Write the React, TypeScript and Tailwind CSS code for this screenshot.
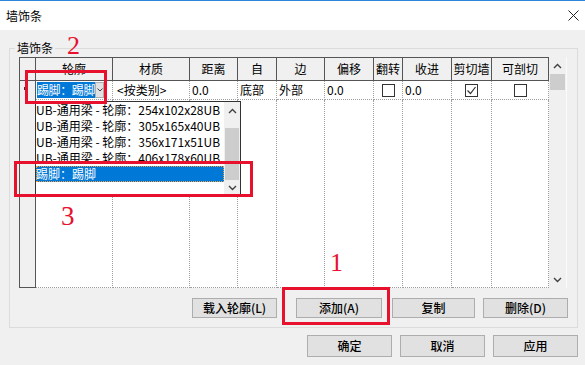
import React from 'react';

const COLS = [
  { w: 'w-[77px]', t: '轮廓' },
  { w: 'w-[77px]', t: '材质' },
  { w: 'w-[48px]', t: '距离' },
  { w: 'w-[39px]', t: '自' },
  { w: 'w-[48px]', t: '边' },
  { w: 'w-[49px]', t: '偏移' },
  { w: 'w-[29px]', t: '翻转' },
  { w: 'w-[49px]', t: '收进' },
  { w: 'w-[40px]', t: '剪切墙' },
  { w: 'w-[57px]', t: '可剖切' },
];

const PROFILES = [
  'UB-通用梁 - 轮廓：254x102x28UB',
  'UB-通用梁 - 轮廓：305x165x40UB',
  'UB-通用梁 - 轮廓：356x171x51UB',
  'UB-通用梁 - 轮廓：406x178x60UB',
];

const Chevron = ({ up }: { up?: boolean }) => (
  <svg width="9" height="6" viewBox="0 0 9 6">
    <polyline
      points={up ? '1,5 4.5,1.5 8,5' : '1,1 4.5,4.5 8,1'}
      fill="none"
      stroke="#404040"
      strokeWidth="1.4"
    />
  </svg>
);

const CheckBox = ({ checked }: { checked?: boolean }) => (
  <div className="w-[13px] h-[13px] border border-[#333] bg-white flex items-center justify-center">
    {checked && (
      <svg width="11" height="11" viewBox="0 0 11 11">
        <polyline points="1.5,5.5 4.5,8.5 9.5,2" fill="none" stroke="#333" strokeWidth="1.2" />
      </svg>
    )}
  </div>
);

const Btn = ({ label, cls }: { label: string; cls: string }) => (
  <button className={`bg-[#e1e1e1] border border-[#adadad] text-[12px] font-medium text-black flex items-center justify-center ${cls}`}>
    {label}
  </button>
);

const cellText = 'border-r border-b border-dotted border-[#a0a0a0] px-[2px] flex items-center text-[12px] whitespace-nowrap overflow-hidden';

export default function App() {
  return (
    <div className="relative w-[585px] h-[365px] overflow-hidden bg-[#f0f0f0] font-['Noto_Sans_CJK_SC',sans-serif] text-black">
      {/* title bar */}
      <div className="h-[30px] bg-white border-t border-[#2b88d8] flex items-center justify-between pl-[6px] pr-[6px]">
        <span className="text-[12px]">墙饰条</span>
        <svg width="11" height="11" viewBox="0 0 11 11">
          <path d="M0.5 0.5 L10.5 10.5 M10.5 0.5 L0.5 10.5" stroke="#222" strokeWidth="1" />
        </svg>
      </div>

      <div className="pl-[9px] pr-[7px] pt-[10px]">
        <fieldset className="border border-[#dcdcdc] px-[9px] pt-[1px] pb-[9px]">
          <legend className="text-[12px] leading-[16px] ml-[-4px] px-[2px]">墙饰条</legend>

          {/* grid */}
          <div className="relative w-[548px] h-[231px] flex">
            <div className="w-[530px] h-full flex flex-col border-l border-t border-[#555] bg-white">
              <div className="flex h-[23px]">
                <div className="w-[16px] border-r border-b border-[#555] bg-[#f0f0f0]" />
                {COLS.map((c) => (
                  <div key={c.t} className={`${c.w} border-r border-b border-[#555] bg-[#f0f0f0] flex items-center justify-center text-[12px] whitespace-nowrap`}>
                    {c.t}
                  </div>
                ))}
              </div>
              <div className="flex h-[19px]">
                <div className="w-[16px] border-r border-[#555] bg-[#f0f0f0] flex items-center pl-[4px]">
                  <div className="w-[1px] h-[3px] bg-[#333] mb-[4px]" />
                </div>
                <div className={`${COLS[0].w} border-r border-b border-dotted border-[#a0a0a0] flex items-center pl-[1px] overflow-hidden`}>
                  <span className="w-[58px] bg-[#0078d7] text-white text-[12px] leading-[16px] tracking-[-0.4px] whitespace-nowrap overflow-hidden shrink-0">踢脚：踢脚</span>
                  <div className="w-[9px] h-[16px] shrink-0 bg-[#e1e1e1] border border-[#adadad] flex items-center justify-center">
                    <svg width="6" height="4" viewBox="0 0 6 4">
                      <polyline points="0.5,0.5 3,3 5.5,0.5" fill="none" stroke="#404040" strokeWidth="1" />
                    </svg>
                  </div>
                </div>
                <div className={`${COLS[1].w} ${cellText} pl-[4px]`}>&lt;按类别&gt;</div>
                <div className={`${COLS[2].w} ${cellText}`}>0.0</div>
                <div className={`${COLS[3].w} ${cellText}`}>底部</div>
                <div className={`${COLS[4].w} ${cellText}`}>外部</div>
                <div className={`${COLS[5].w} ${cellText}`}>0.0</div>
                <div className={`${COLS[6].w} ${cellText} justify-center`}>
                  <CheckBox />
                </div>
                <div className={`${COLS[7].w} ${cellText}`}>0.0</div>
                <div className={`${COLS[8].w} ${cellText} justify-center`}>
                  <CheckBox checked />
                </div>
                <div className={`${COLS[9].w} ${cellText} justify-center`}>
                  <CheckBox />
                </div>
              </div>
              <div className="flex flex-1">
                <div className="w-[16px] border-r border-b border-[#555] bg-[#f0f0f0]" />
                {COLS.map((c) => (
                  <div key={c.t} className={`${c.w} border-r border-b border-dotted border-[#a0a0a0]`} />
                ))}
              </div>
            </div>

            {/* grid scrollbar */}
            <div className="w-[18px] h-full bg-[#f0f0f0] border-r border-[#fafafa] flex flex-col">
              <div className="h-[17px] flex items-center justify-center">
                <Chevron up />
              </div>
              <div className="h-[16px] mx-[1px] bg-[#cdcdcd]" />
              <div className="flex-1" />
              <div className="h-[17px] flex items-center justify-center">
                <Chevron />
              </div>
            </div>

            {/* open combo list */}
            <div className="absolute left-[16px] top-[44px] w-[206px] h-[96px] bg-white border border-[#333] flex">
              <div className="flex-1 flex flex-col">
                {PROFILES.map((p) => (
                  <div key={p} className="h-[16px] leading-[16px] text-[12px] whitespace-nowrap overflow-hidden">
                    {p}
                  </div>
                ))}
                <div className="h-[16px] leading-[16px] text-[12px] bg-[#0078d7] text-white outline outline-1 outline-dotted outline-[#f0a040] -outline-offset-1">
                  踢脚：踢脚
                </div>
              </div>
              <div className="w-[16px] bg-[#f0f0f0] flex flex-col">
                <div className="h-[17px] flex items-center justify-center">
                  <Chevron up />
                </div>
                <div className="h-[9px]" />
                <div className="h-[52px] mx-[1px] bg-[#cdcdcd]" />
                <div className="flex-1 flex items-center justify-center">
                  <Chevron />
                </div>
              </div>
            </div>
          </div>

          <div className="flex justify-end mt-[10px] h-[20px]">
            <Btn label="载入轮廓(L)" cls="w-[85px]" />
            <Btn label="添加(A)" cls="w-[86px] ml-[19px]" />
            <Btn label="复制" cls="w-[83px] ml-[10px]" />
            <Btn label="删除(D)" cls="w-[85px] ml-[8px]" />
          </div>
        </fieldset>

        <div className="flex justify-end gap-[8px] mt-[7px] h-[22px]">
          <Btn label="确定" cls="w-[85px]" />
          <Btn label="取消" cls="w-[85px]" />
          <Btn label="应用" cls="w-[85px]" />
        </div>
      </div>

      {/* annotations */}
      <div className="absolute left-[282px] top-[287px] w-[108px] h-[38px] border-[3px] border-[#e8112d]" />
      <div className="absolute left-[25px] top-[70px] w-[82px] h-[34px] border-[3px] border-[#e8112d]" />
      <div className="absolute left-[14px] top-[161px] w-[239px] h-[36px] border-[3px] border-[#e8112d]" />
      <span className="absolute left-[67px] top-[33px] text-[26px] leading-none text-[#e8112d] font-['Liberation_Serif',serif]">2</span>
      <span className="absolute left-[61px] top-[203px] text-[27px] leading-none text-[#e8112d] font-['Liberation_Serif',serif]">3</span>
      <span className="absolute left-[330px] top-[250px] text-[26px] leading-none text-[#e8112d] font-['Liberation_Serif',serif]">1</span>
    </div>
  );
}
